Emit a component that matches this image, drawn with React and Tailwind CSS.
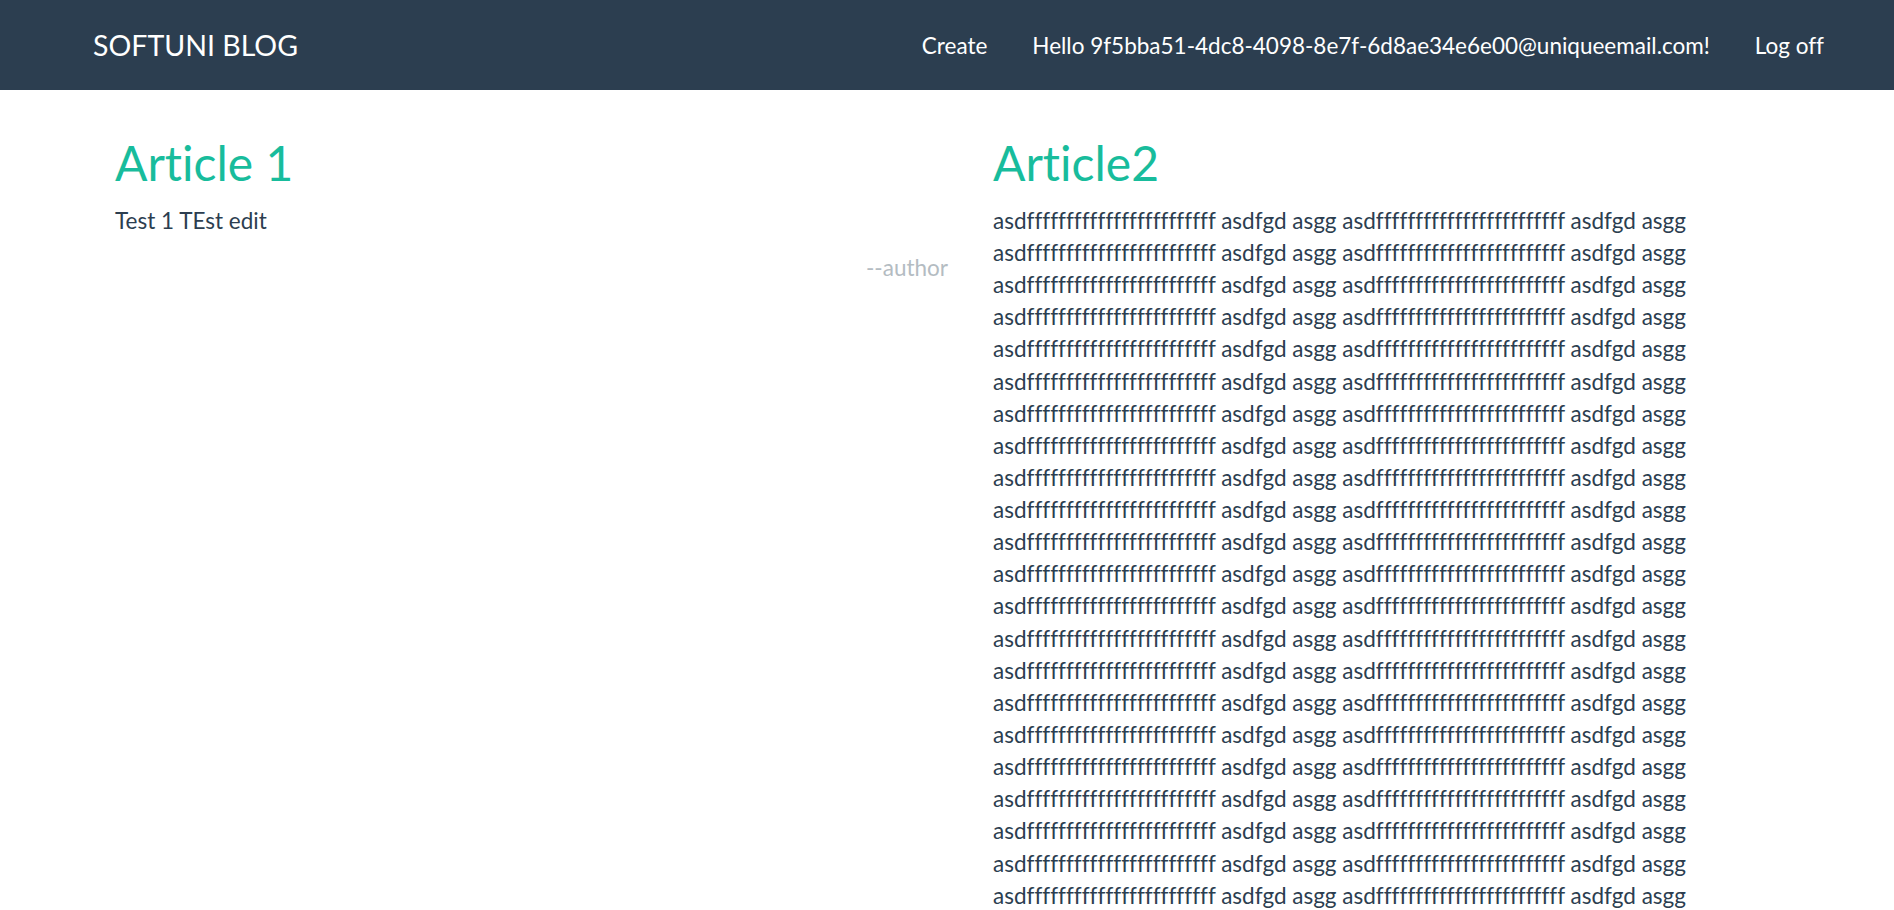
import React from 'react';

const longWord = 'asd' + 'f'.repeat(24);
const bodyText = Array.from({ length: 60 }, () => `${longWord} asdfgd asgg`).join(' ');

const articles = [
  { title: 'Article 1', content: 'Test 1 TEst edit', author: '--author' },
  { title: 'Article2', content: bodyText, author: '--author' },
];

const Navbar = () => (
  <nav className="h-[90px] bg-[#2c3e50] text-white flex items-center justify-between pl-[93px] pr-[47.5px]">
    <a className="text-[28.5px] leading-[1.2]">SOFTUNI BLOG</a>
    <ul className="flex items-center text-[22.5px] leading-[1.2]">
      <li className="px-[22.5px]">Create</li>
      <li className="px-[22.5px]">Hello 9f5bba51-4dc8-4098-8e7f-6d8ae34e6e00@uniqueemail.com!</li>
      <li className="px-[22.5px]">Log off</li>
    </ul>
  </nav>
);

const ArticleCard = ({ article }) => (
  <article className="w-[878px] px-[22.5px]">
    {/* Header */}
    <h2 className="text-[48px] leading-[52.8px] text-[#18bc9c] mb-[15px]">{article.title}</h2>
    <p className="text-[22.5px] leading-[32.14px] mb-[15px] break-words">{article.content}</p>
    {/* Footer */}
    <div className="flex justify-end">
      <small className="text-[22.5px] leading-[32.14px] text-[#b4bcc2]">{article.author}</small>
    </div>
  </article>
);

export default function App() {
  return (
    <div className="min-h-screen bg-white text-[#2c3e50] font-['Lato',sans-serif] [font-variant-ligatures:none]">
      <Navbar />
      <main className="pt-[47px] pl-[92.5px] flex items-start">
        {articles.map((a) => (
          <ArticleCard key={a.title} article={a} />
        ))}
      </main>
    </div>
  );
}
